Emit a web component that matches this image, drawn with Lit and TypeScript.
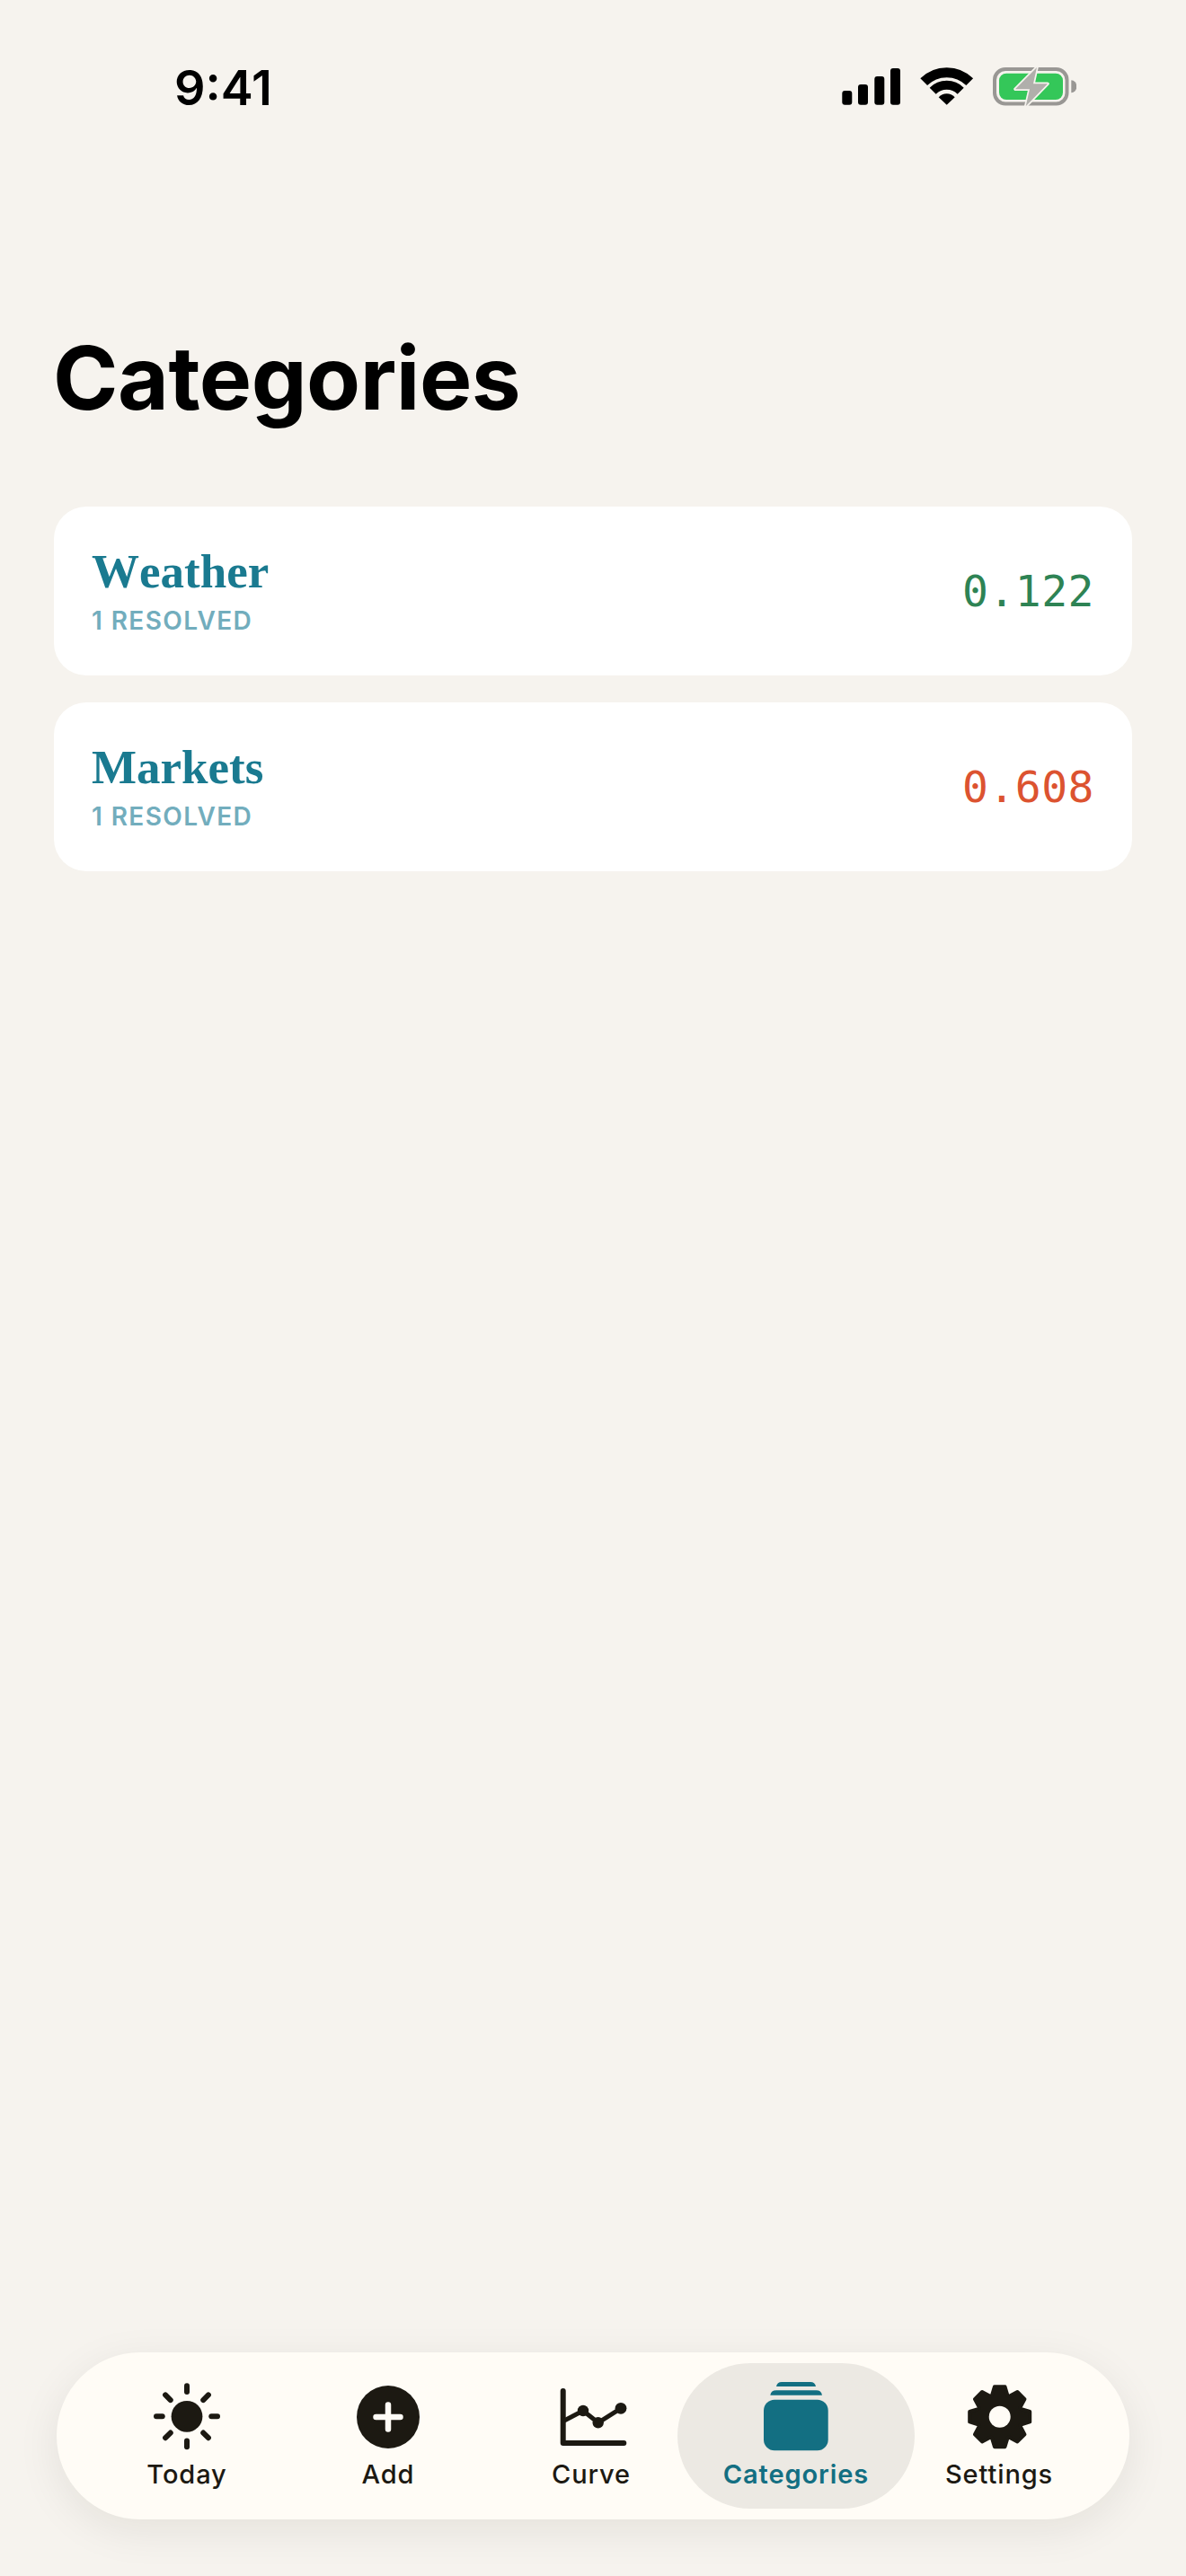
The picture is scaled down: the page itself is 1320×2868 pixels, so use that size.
import { LitElement, css, html, svg } from 'lit';
import { customElement } from 'lit/decorators.js';
import { classMap } from 'lit/directives/class-map.js';

const categories = [
  { name: 'Weather', resolved: 1, score: '0.122', tone: 'good' },
  { name: 'Markets', resolved: 1, score: '0.608', tone: 'bad' },
];

// 8 toothed outline, corners get rounded by the stroke join
function gearPath(cx: number, cy: number) {
  const pts: string[] = [];
  for (let i = 0; i < 8; i++) {
    const a = (i * Math.PI) / 4 - Math.PI / 2;
    const at = (r: number, da: number) =>
      `${(cx + r * Math.cos(a + da)).toFixed(2)} ${(cy + r * Math.sin(a + da)).toFixed(2)}`;
    pts.push(at(25, -0.36), at(34, -0.17), at(34, 0.17), at(25, 0.36));
  }
  return `M${pts.join('L')}Z`;
}

const rays = Array.from({ length: 8 }, (_, i) => i * 45);

const icons = {
  today: svg`
    <circle cx="42" cy="42.3" r="17.4" fill="currentColor" />
    ${rays.map(deg => {
      const diagonal = deg % 90 !== 0;
      return svg`<line x1="42" x2="42" y1=${diagonal ? 8.5 : 8.3} y2=${diagonal ? 16.5 : 15}
        transform="rotate(${deg} 42 42.3)" stroke="currentColor" stroke-width="6" stroke-linecap="round" />`;
    })}`,
  add: svg`
    <circle cx="42" cy="43" r="35" fill="currentColor" />
    <path d="M42 29.5V56.5M28.5 43H55.5" stroke="#fffcf6" stroke-width="6.5" stroke-linecap="round" />`,
  curve: svg`
    <path d="M10.7 14V72H78.3" fill="none" stroke="currentColor" stroke-width="6" stroke-linecap="round" stroke-linejoin="round" />
    <path d="M12 47L33 36L49.7 49.3L75 33.3" fill="none" stroke="currentColor" stroke-width="5" stroke-linejoin="round" />
    <circle cx="33" cy="36" r="6.2" fill="currentColor" />
    <circle cx="49.7" cy="49.3" r="6.2" fill="currentColor" />
    <circle cx="75" cy="33.3" r="6.4" fill="currentColor" />`,
  categories: svg`
    <rect x="6" y="23.7" width="71.7" height="56.6" rx="12" fill="currentColor" />
    <path d="M13.3 18.7Q14.2 13.3 20 13.3H64.5Q70 13.3 71 18.7Z" fill="currentColor" />
    <path d="M20 9Q21 4 26 4H58Q63 4 64 9Z" fill="currentColor" />`,
  settings: svg`
    <path d=${gearPath(42.7, 42.7)} fill="currentColor" stroke="currentColor" stroke-width="4" stroke-linejoin="round" />
    <circle cx="42.7" cy="42.7" r="12" fill="#fffcf6" />`,
};

const tabs = [
  { label: 'Today', icon: icons.today },
  { label: 'Add', icon: icons.add },
  { label: 'Curve', icon: icons.curve },
  { label: 'Categories', icon: icons.categories, active: true },
  { label: 'Settings', icon: icons.settings },
];

@customElement('app-root')
export class AppRoot extends LitElement {
  static styles = css`
    :host {
      display: block;
    }
    .screen {
      display: flex;
      flex-direction: column;
      width: 1320px;
      height: 2868px;
      background: #f6f3ee;
      font-family: Inter, 'Liberation Sans', sans-serif;
      color: #000;
    }
    .status {
      display: flex;
      align-items: center;
      justify-content: space-between;
      height: 195px;
      padding: 0 122px 0 194px;
      box-sizing: border-box;
    }
    .time {
      font-size: 54px;
      font-weight: 600;
      line-height: 64px;
    }
    .status-icons {
      display: flex;
      margin-top: -2px;
    }
    .status-icons svg {
      display: block;
    }
    main {
      flex: 1;
      padding: 0 60px;
    }
    h1 {
      margin: 166px 0 0 -1px;
      font-size: 98px;
      font-weight: 700;
      line-height: 120px;
      letter-spacing: -0.5px;
    }
    .cards {
      display: flex;
      flex-direction: column;
      gap: 30px;
      margin-top: 83px;
    }
    .card {
      display: flex;
      align-items: center;
      justify-content: space-between;
      height: 188px;
      padding: 0 42px;
      box-sizing: border-box;
      border-radius: 36px;
      background: #fff;
    }
    .name {
      margin-top: -3px;
      font-family: 'Liberation Serif', serif;
      font-size: 53px;
      font-weight: 700;
      font-kerning: none;
      line-height: 60px;
      color: #1a7a90;
    }
    .resolved {
      margin-top: 8px;
      font-size: 28px;
      font-weight: 600;
      line-height: 34px;
      letter-spacing: 1.4px;
      color: #72adbd;
    }
    .score {
      font-family: 'DejaVu Sans Mono', monospace;
      font-size: 48px;
      line-height: 60px;
      letter-spacing: 0.5px;
    }
    .good {
      color: #2e8354;
    }
    .bad {
      color: #dc5330;
    }
    .tabbar {
      display: grid;
      grid-template-columns: 226px 222px 230px 226px 226px;
      justify-content: center;
      align-items: center;
      margin: 0 63px 63px;
      height: 186px;
      border-radius: 93px;
      background: #fffcf6;
      box-shadow: 0 12px 48px rgba(28, 25, 18, 0.08);
      color: #1c1912;
    }
    .tab {
      display: flex;
      flex-direction: column;
      align-items: center;
      justify-self: center;
      width: 226px;
      height: 162px;
      padding-top: 17px;
      box-sizing: border-box;
      border-radius: 81px;
    }
    .tab svg {
      display: block;
      width: 84px;
      height: 84px;
    }
    .tab.active {
      width: 264px;
      background: #ece9e3;
      color: #136f82;
    }
    .label {
      margin-top: 5px;
      font-size: 29px;
      font-weight: 500;
      line-height: 36px;
      letter-spacing: 0.9px;
      white-space: nowrap;
    }
    .active .label {
      font-weight: 600;
    }
  `;

  private renderStatusIcons() {
    return html`
      <div class="status-icons">
        <svg width="262" height="46" viewBox="936 74 262 46">
          <rect x="937.3" y="101" width="11" height="15.7" rx="3" />
          <rect x="955" y="94" width="11" height="22.7" rx="3" />
          <rect x="973.3" y="85" width="11" height="31.7" rx="3" />
          <rect x="991" y="76" width="11" height="40.7" rx="3" />
          <g transform="translate(1053.7 116.7)">
            <path d="M-25.5 -25.5A36.2 36.2 0 0 1 25.5 -25.5" fill="none" stroke="#000" stroke-width="11" />
            <path d="M-15.5 -15.5A22 22 0 0 1 15.5 -15.5" fill="none" stroke="#000" stroke-width="10" />
            <path d="M0 0L-9 -8.5A12.5 12.5 0 0 1 9 -8.5Z" />
          </g>
          <rect x="1107" y="77" width="80.5" height="38.5" rx="12" fill="none" stroke="#999794" stroke-width="4" />
          <rect x="1112" y="81.7" width="71" height="29.3" rx="8" fill="#34c759" />
          <path d="M1192.3 89.3A6 7 0 0 1 1192.3 103.3Z" fill="#999794" />
          <path
            d="M1154 75L1130 99.3H1146L1141.7 118.3L1166 93.3H1150Z"
            fill="#b0afab"
            stroke="#f6f3ee"
            stroke-width="3.5"
            stroke-linejoin="round"
            paint-order="stroke"
          />
        </svg>
      </div>
    `;
  }

  render() {
    return html`
      <div class="screen">
        <div class="status">
          <span class="time">9:41</span>
          ${this.renderStatusIcons()}
        </div>
        <main>
          <h1>Categories</h1>
          <div class="cards">
            ${categories.map(
              c => html`
                <div class="card">
                  <div>
                    <div class="name">${c.name}</div>
                    <div class="resolved">${c.resolved} RESOLVED</div>
                  </div>
                  <div class="score ${c.tone}">${c.score}</div>
                </div>
              `
            )}
          </div>
        </main>
        <nav class="tabbar">
          ${tabs.map(
            t => html`
              <div class=${classMap({ tab: true, active: !!t.active })}>
                <svg viewBox="0 0 84 84">${t.icon}</svg>
                <span class="label">${t.label}</span>
              </div>
            `
          )}
        </nav>
      </div>
    `;
  }
}
